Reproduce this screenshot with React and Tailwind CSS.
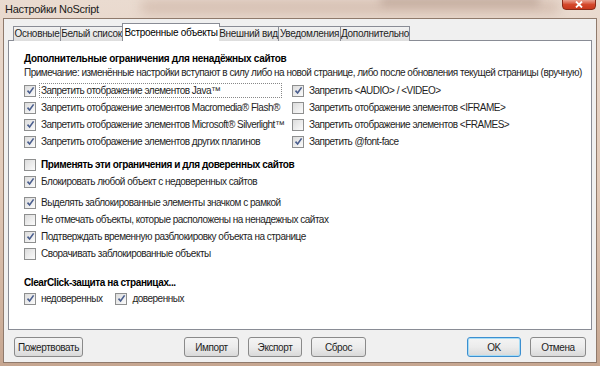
import React from 'react';

const font = { fontFamily: '"Liberation Sans", Arial, sans-serif' };

function Check({ on }) {
  return (
    <span className="inline-flex items-center justify-center w-[12px] h-[12px] border border-[#8e8f8f] bg-gradient-to-br from-[#dcdcdc] to-[#fbfbfb] shrink-0">
      {on && (
        <svg width="9" height="9" viewBox="0 0 9 9">
          <path d="M1.5 4.6 L3.6 7 L7.6 1.4" fill="none" stroke="#4a5e8e" strokeWidth="1.6" />
        </svg>
      )}
    </span>
  );
}

function Row({ on, children, focus, bold, className = '' }) {
  return (
    <div className={`flex items-center h-[17px] whitespace-nowrap ${className}`}>
      <Check on={on} />
      <span
        className={`ml-[3px] px-[1px] leading-[13px] ${
          bold ? 'font-bold text-black tracking-[-0.4px]' : 'text-[#1e1e1e] tracking-[-0.5px]'
        } ${focus ? 'border border-dotted border-[#888] w-[243px]' : 'border border-transparent'}`}
      >
        {children}
      </span>
    </div>
  );
}

function Btn({ children, w, ok }) {
  return (
    <button
      className={`h-[20px] ${w} rounded-[3px] border ${
        ok ? 'border-[#3c8fd0] shadow-[inset_0_0_0_1px_#a6dcf6]' : 'border-[#8a8a8a]'
      } bg-gradient-to-b from-[#f4f4f4] via-[#ececec] to-[#d9d9d9] text-[10px] tracking-[-0.4px] text-[#1e1e1e]`}
    >
      {children}
    </button>
  );
}

const tabs = [
  ['Основные', 'w-[48px]'],
  ['Белый список', 'w-[62px]'],
  ['Встроенные объекты', 'w-[98px]'],
  ['Внешний вид', 'w-[60px]'],
  ['Уведомления', 'w-[62px]'],
  ['Дополнительно', 'w-[69px]'],
];

export default function App() {
  return (
    <div
      className="w-[600px] h-[366px] flex flex-col bg-gradient-to-b from-[#eadbd0] via-[#e2cab9] to-[#c6a690] overflow-hidden relative text-[10px]"
      style={font}
    >
      {/* blurred background behind glass */}
      <div className="absolute left-[140px] top-[0px] w-[420px] h-[14px] bg-[#b89886]/40 blur-[6px] rounded-full" />
      <div className="absolute left-[380px] top-[-4px] w-[160px] h-[10px] bg-[#8c6c5c]/30 blur-[4px] rounded-full" />

      <div className="relative flex items-start justify-between h-[18px] pl-[5px] pr-[4px]">
        <span className="text-[11px] tracking-[-0.3px] leading-[18px] text-[#1a1a1a]">Настройки NoScript</span>
        <div className="w-[34px] h-[11px] mt-[-1px] rounded-b-[4px] border border-[#8a2a18] bg-gradient-to-b from-[#e8a090] via-[#d4482c] to-[#c8381c] flex items-center justify-center">
          <svg width="8" height="7" viewBox="0 0 8 7">
            <path d="M1 0.5 L7 6.5 M7 0.5 L1 6.5" stroke="#fff" strokeWidth="1.8" />
          </svg>
        </div>
      </div>

      <div className="relative flex-1 mx-[3px] mb-[3px] border border-[#8f7a6c] bg-[#f0f0f0] flex flex-col px-[4px] pt-[5px]">
        {/* tabs */}
        <div className="flex items-end h-[17px] pl-[5px] relative z-10">
          {tabs.map(([t, w], i) =>
            i === 2 ? (
              <div
                key={t}
                className={`${w} shrink-0 whitespace-nowrap h-[18px] mx-[-1px] border border-b-0 border-[#898c95] bg-white text-center text-[10px] tracking-[-0.3px] leading-[17px] text-black`}
              >
                {t}
              </div>
            ) : (
              <div
                key={t}
                className={`${w} shrink-0 whitespace-nowrap h-[15px] border border-b-0 border-l-0 first:border-l border-[#898c95] bg-gradient-to-b from-[#f2f2f2] to-[#dedede] text-center text-[10px] tracking-[-0.3px] leading-[14px] text-[#1e1e1e]`}
              >
                {t}
              </div>
            )
          )}
        </div>

        {/* panel */}
        <div className="h-[290px] mt-[-1px] border border-[#898c95] bg-white pl-[15px] pt-[11px]">
          <div className="font-bold text-black leading-[14px] tracking-[-0.3px]">
            Дополнительные ограничения для ненадёжных сайтов
          </div>
          <div className="text-[#1e1e1e] leading-[14px] tracking-[-0.5px]">
            Примечание: изменённые настройки вступают в силу либо на новой странице, либо после обновления текущей страницы (вручную)
          </div>

          <div className="flex mt-[2px]">
            <div className="w-[268px] flex flex-col">
              <Row on focus>Запретить отображение элементов Java™</Row>
              <Row on>Запретить отображение элементов Macromedia® Flash®</Row>
              <Row on>Запретить отображение элементов Microsoft® Silverlight™</Row>
              <Row on>Запретить отображение элементов других плагинов</Row>
            </div>
            <div className="flex flex-col">
              <Row on>Запретить &lt;AUDIO&gt; / &lt;VIDEO&gt;</Row>
              <Row>Запретить отображение элементов &lt;IFRAME&gt;</Row>
              <Row>Запретить отображение элементов &lt;FRAMES&gt;</Row>
              <Row on>Запретить @font-face</Row>
            </div>
          </div>

          <Row bold className="mt-[6px]">Применять эти ограничения и для доверенных сайтов</Row>
          <Row on>Блокировать любой объект с недоверенных сайтов</Row>

          <Row on className="mt-[4px]">Выделять заблокированные элементы значком с рамкой</Row>
          <Row>Не отмечать объекты, которые расположены на ненадежных сайтах</Row>
          <Row on>Подтверждать временную разблокировку объекта на странице</Row>
          <Row>Сворачивать заблокированные объекты</Row>

          <div className="font-bold text-black leading-[14px] tracking-[-0.4px] mt-[14px]">
            ClearClick-защита на страницах...
          </div>
          <div className="flex">
            <Row on>недоверенных</Row>
            <Row on className="ml-[11px]">доверенных</Row>
          </div>
        </div>

        {/* buttons */}
        <div className="flex items-center mt-[7px] pl-[6px] pr-[6px]">
          <Btn w="w-[69px]">Пожертвовать</Btn>
          <div className="flex-1" />
          <div className="flex gap-[9px] mr-[101px]">
            <Btn w="w-[55px]">Импорт</Btn>
            <Btn w="w-[54px]">Экспорт</Btn>
            <Btn w="w-[55px]">Сброс</Btn>
          </div>
          <div className="flex gap-[9px]">
            <Btn w="w-[54px]" ok>OK</Btn>
            <Btn w="w-[56px]">Отмена</Btn>
          </div>
        </div>
      </div>
    </div>
  );
}
